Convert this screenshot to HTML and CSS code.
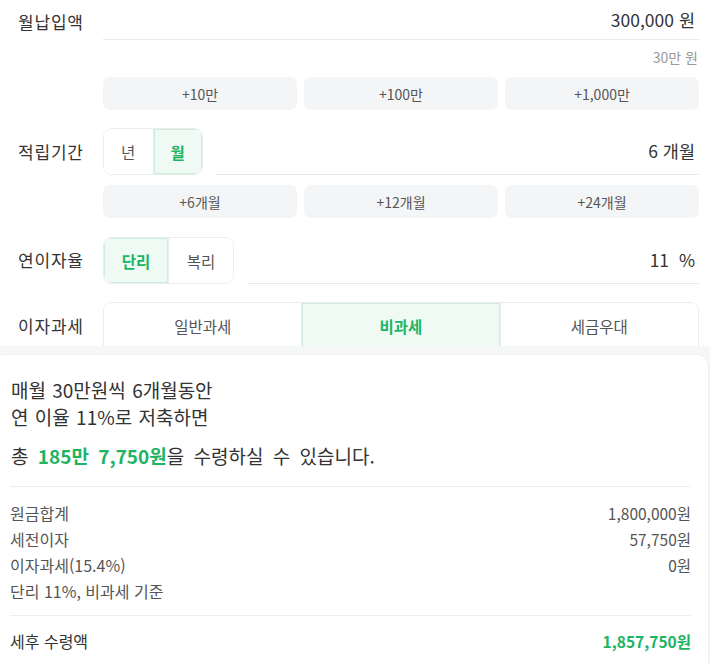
FILE: index.html
```html
<!DOCTYPE html>
<html lang="ko">
<head>
<meta charset="utf-8">
<link rel="stylesheet" href="styles.css">
</head>
<body>
<div class="form">
  <div class="row row-amount">
    <div class="label">월납입액</div>
    <div class="field">
      <div class="input-line full"><span class="value">300,000 원</span></div>
      <div class="hint">30만 원</div>
      <div class="quick">
        <button class="qbtn">+10만</button>
        <button class="qbtn">+100만</button>
        <button class="qbtn">+1,000만</button>
      </div>
    </div>
  </div>

  <div class="row row-period">
    <div class="label">적립기간</div>
    <div class="field">
      <div class="inline">
        <div class="toggle t-period">
          <span class="opt">년</span>
          <span class="opt on">월</span>
        </div>
        <div class="input-line grow"><span class="value">6 개월</span></div>
      </div>
      <div class="quick q2">
        <button class="qbtn">+6개월</button>
        <button class="qbtn">+12개월</button>
        <button class="qbtn">+24개월</button>
      </div>
    </div>
  </div>

  <div class="row row-rate">
    <div class="label">연이자율</div>
    <div class="field">
      <div class="inline">
        <div class="toggle t-rate">
          <span class="opt on">단리</span>
          <span class="opt">복리</span>
        </div>
        <div class="input-line grow gap2"><span class="value">11&nbsp;&nbsp;%</span></div>
      </div>
    </div>
  </div>

  <div class="row row-tax">
    <div class="label">이자과세</div>
    <div class="field">
      <div class="toggle t-tax">
        <span class="opt">일반과세</span>
        <span class="opt on">비과세</span>
        <span class="opt">세금우대</span>
      </div>
    </div>
  </div>
</div>

<div class="sheet">
  <div class="card">
    <p class="summary">매월 30만원씩 6개월동안<br>연 이율 11%로 저축하면</p>
    <p class="total">총 <strong>185만 7,750원</strong>을 수령하실 수 있습니다.</p>
    <div class="divider"></div>
    <div class="details">
      <div class="drow"><span>원금합계</span><span class="num">1,800,000원</span></div>
      <div class="drow"><span>세전이자</span><span class="num">57,750원</span></div>
      <div class="drow"><span>이자과세(15.4%)</span><span class="num">0원</span></div>
      <div class="drow"><span>단리 11%, 비과세 기준</span><span></span></div>
    </div>
    <div class="divider d2"></div>
    <div class="drow final"><span>세후 수령액</span><span class="num green">1,857,750원</span></div>
  </div>
</div>
</body>
</html>
```

FILE: styles.css
```css
* { box-sizing: border-box; }
html, body {
  margin: 0;
  padding: 0;
  background: #fff;
  font-family: "Noto Sans CJK KR", "Noto Sans", sans-serif;
  color: #333;
  overflow: hidden;
}
.form {
  padding: 0 11px 0 18px;
}
.row {
  display: flex;
  align-items: flex-start;
}
.label {
  width: 85px;
  flex: none;
  font-size: 17px;
  line-height: 20px;
  letter-spacing: 0.8px;
  color: #333;
}
.field {
  flex: 1;
  min-width: 0;
}
.row-amount .label { padding-top: 12px; }
.input-line {
  border-bottom: 1px solid #e9e9e9;
  display: flex;
  align-items: center;
  justify-content: flex-end;
  padding-right: 4px;
}
.input-line.full { height: 40px; }
.value {
  font-size: 17.5px;
  line-height: 22px;
  color: #333;
}
.hint {
  text-align: right;
  font-size: 14px;
  line-height: 20px;
  color: #9a9a9a;
  margin-top: 7px;
  padding-right: 1px;
}
.quick {
  display: grid;
  grid-template-columns: repeat(3, 1fr);
  gap: 7px;
  margin-top: 10px;
}
.qbtn {
  height: 33px;
  border: none;
  border-radius: 7px;
  background: #f4f5f7;
  font-family: inherit;
  font-size: 14px;
  color: #555;
  padding: 0;
}
.row-period { margin-top: 18px; }
.row-period .label { padding-top: 14px; }
.inline {
  display: flex;
  align-items: stretch;
}
.toggle {
  display: flex;
  border: 1px solid #ebecee;
  border-radius: 9px;
  overflow: hidden;
  height: 47px;
  flex: none;
}
.opt {
  flex: 1;
  display: flex;
  align-items: center;
  justify-content: center;
  font-size: 15.5px;
  color: #555;
  background: #fff;
}
.opt + .opt { border-left: 1px solid #ebecee; }
.opt.on {
  background: #effaf5;
  color: #1eb464;
  font-weight: 700;
  box-shadow: inset 0 0 0 1px #cdeedd;
}
.t-period { width: 100px; }
.t-rate { width: 131px; }
.grow { flex: 1; margin-left: 13px; }
.gap2 { margin-left: 14px; }
.q2 { margin-top: 10px; }
.row-rate { margin-top: 19px; }
.row-rate .label { padding-top: 13px; }
.row-tax { margin-top: 18px; height: 44px; }
.row-tax .label { padding-top: 14px; }
.t-tax {
  width: 100%;
  height: 47px;
  border-bottom: none;
  border-radius: 9px 9px 0 0;
}
.t-tax .opt { flex: 1; }

.sheet {
  background: #f6f7f8;
  padding-top: 8px;
  position: relative;
  z-index: 1;
}
.card {
  background: #fff;
  width: 709px;
  border-radius: 4px 12px 0 0;
  border-top: 1px solid #eeeff1;
  border-right: 1px solid #eeeff1;
  padding: 21px 17px 20px 10px;
}
.summary {
  margin: 0;
  font-size: 19px;
  line-height: 27px;
  word-spacing: 1px;
  color: #333;
  padding-left: 1px;
}
.total {
  margin: 12px 0 0;
  font-size: 19px;
  line-height: 27px;
  word-spacing: 4px;
  color: #333;
  padding-left: 1px;
}
.total strong, .green {
  color: #1eb464;
  font-weight: 700;
}
.divider {
  height: 1px;
  background: #eeeeee;
  margin: 17px 0 13px;
}
.divider.d2 { margin: 11px 0 12px; }
.drow {
  display: flex;
  justify-content: space-between;
  font-size: 16px;
  line-height: 26px;
  color: #555;
}
.num { font-size: 15.5px; }
.final { color: #333; }
```
